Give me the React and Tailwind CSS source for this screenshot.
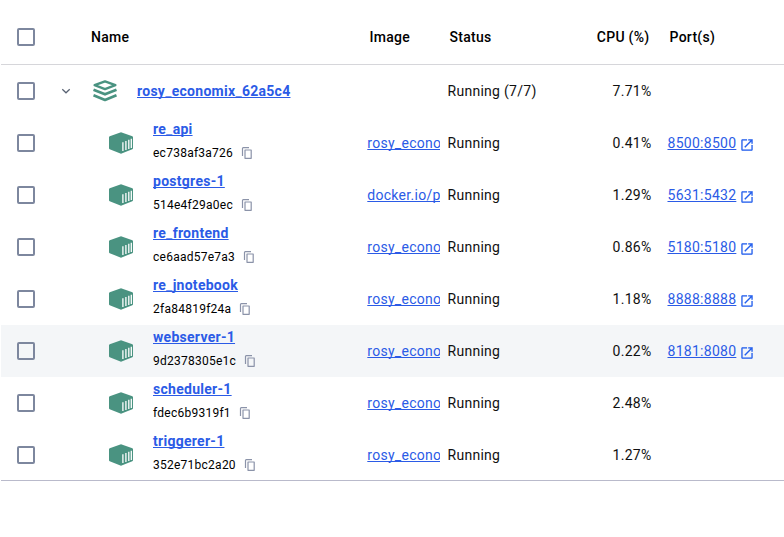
import React from "react";

const containers = [
  { name: "re_api", id: "ec738af3a726", image: "rosy_econo", cpu: "0.41%", port: "8500:8500" },
  { name: "postgres-1", id: "514e4f29a0ec", image: "docker.io/p", cpu: "1.29%", port: "5631:5432" },
  { name: "re_frontend", id: "ce6aad57e7a3", image: "rosy_econo", cpu: "0.86%", port: "5180:5180" },
  { name: "re_jnotebook", id: "2fa84819f24a", image: "rosy_econo", cpu: "1.18%", port: "8888:8888" },
  { name: "webserver-1", id: "9d2378305e1c", image: "rosy_econo", cpu: "0.22%", port: "8181:8080", hovered: true },
  { name: "scheduler-1", id: "fdec6b9319f1", image: "rosy_econo", cpu: "2.48%" },
  { name: "triggerer-1", id: "352e71bc2a20", image: "rosy_econo", cpu: "1.27%" },
];

function Checkbox() {
  return (
    <div className="w-[49px] shrink-0 pl-4">
      <div className="size-[18px] rounded-[2px] border-2 border-[#7d879e]" />
    </div>
  );
}

function StackIcon() {
  return (
    <svg className="ml-0.5 size-6 shrink-0" viewBox="0 0 24 24" fill="none" stroke="#4a9381" strokeWidth="2.3" strokeLinejoin="round">
      <path d="M1.6 6.2 12 2.4 22.4 6.2 12 10.1Z" />
      <path d="M.5 10.7 12 15.3 23.5 10.7M.5 16.2 12 20.9 23.5 16.2" strokeWidth="2.7" />
    </svg>
  );
}

function ContainerIcon() {
  return (
    <svg className="ml-[18px] size-6 shrink-0" viewBox="0 0 24 24">
      <path d="M12 1.2 23.4 5.3 24 6V17.4L23.3 18.2 12 22.7.7 18.2 0 17.4V6L.7 5.3Z" fill="#4a9381" />
      <path d="M13.9 11.2V20M16.9 10V19M19.8 8.8V18M22.3 7.8V17" stroke="#fff" strokeWidth="1.3" />
    </svg>
  );
}

function CopyIcon() {
  return (
    <svg className="size-3" viewBox="0 0 12 12" fill="none" stroke="#8b93a9">
      <path d="M1.5 9V1.5Q1.5 .7 2.3 .7H8" strokeWidth="1.2" />
      <path d="M4 3H10.2V11.3H4Z" strokeWidth="1.2" strokeLinejoin="round" />
    </svg>
  );
}

function OpenIcon() {
  return (
    <svg className="ml-[5px] mt-[3px] size-3 shrink-0" viewBox="2.5 2.5 19 19" fill="#2560ed" stroke="#2560ed" strokeWidth=".2">
      <path d="M19 19H5V5h7V3H5c-1.11 0-2 .9-2 2v14c0 1.1.89 2 2 2h14c1.1 0 2-.9 2-2v-7h-2v7zM14 3v2h3.59l-9.83 9.83 1.41 1.41L19 6.41V10h2V3h-7z" />
    </svg>
  );
}

const link = "text-[#2b5be6] underline underline-offset-1 decoration-1 [text-decoration-skip-ink:none]";

export default function App() {
  return (
    <div className="h-[537px] w-[784px] overflow-hidden bg-white pl-px font-[Roboto,sans-serif] text-sm leading-5 tracking-[0.28px] text-[#111]">
      <div className="flex h-[65px] items-center border-b border-[#d6d6da] pt-2.5 font-medium text-black">
        <Checkbox />
        <div className="ml-[41px] w-[278.5px]">Name</div>
        <div className="w-20">Image</div>
        <div className="w-[120px]">Status</div>
        <div className="w-20 text-right">CPU (%)</div>
        <div className="ml-5">Port(s)</div>
      </div>
      <div className="border-b border-[#b9bacb]">
        <div className="flex h-[52px] items-center">
          <Checkbox />
          <div className="w-[41px] pl-2.5">
            <svg className="size-3" viewBox="0 0 12 12" fill="none" stroke="#596273" strokeWidth="1.2">
              <path d="m2.3 4.2 3.7 3.6 3.7-3.6" />
            </svg>
          </div>
          <div className="flex w-[276.5px] items-center">
            <StackIcon />
            <span className={"ml-5 font-bold " + link}>rosy_economix_62a5c4</span>
          </div>
          <div className="ml-20 w-[120px]">Running (7/7)</div>
          <div className="w-[84px] text-right">7.71%</div>
        </div>
        {containers.map((c) => (
          <div
            key={c.id}
            className={"flex h-[52px] items-center last:-mb-px " + (c.hovered ? "bg-[#f4f6f8]" : "")}
          >
            <Checkbox />
            <div className="ml-[41px] flex w-[276.3px] items-center">
              <ContainerIcon />
              <div className="ml-5 flex flex-col gap-1.5 pb-1.5">
                <span className={"font-bold " + link}>{c.name}</span>
                <div className="flex items-center gap-2 text-xs tracking-[0.25px] text-black">
                  <span>{c.id}</span>
                  <CopyIcon />
                </div>
              </div>
            </div>
            <div className={"w-[72.6px] overflow-hidden whitespace-nowrap " + link}>{c.image}</div>
            <div className="ml-[7.6px] w-[120px]">Running</div>
            <div className="w-[84px] text-right">{c.cpu}</div>
            {c.port && (
              <div className="ml-4 flex items-center">
                <span className={link}>{c.port}</span>
                <OpenIcon />
              </div>
            )}
          </div>
        ))}
      </div>
    </div>
  );
}
